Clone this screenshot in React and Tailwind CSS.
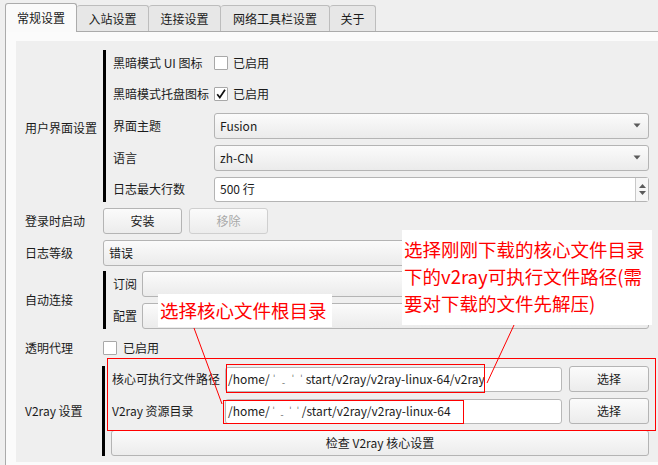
import React from "react";

const F = "font-['Noto_Sans_CJK_SC','Noto_Sans',sans-serif]";

function Arrow() {
  return (
    <svg width="8" height="5" viewBox="0 0 8 5">
      <path d="M0.5 0.5h7L4 4.5z" fill="#5a5a5a" />
    </svg>
  );
}

function Combo({ text, className = "" }) {
  return (
    <div
      className={`h-[26px] flex items-center justify-between pl-[5px] pr-[7px] rounded-[3px] border border-[#b4b4b4] bg-linear-to-b from-[#fbfbfb] to-[#ebebeb] ${className}`}
    >
      <span>{text}</span>
      <Arrow />
    </div>
  );
}

function Spin({ text }) {
  return (
    <div className="h-[25px] flex items-stretch rounded-[3px] border border-[#b4b4b4] bg-white flex-1">
      <div className="flex-1 flex items-center pl-[5px]">{text}</div>
      <div className="w-[13px] border-l border-[#c8c8c8] flex flex-col items-center justify-center gap-[3px] bg-[#f6f6f6]">
        <svg width="7" height="4" viewBox="0 0 7 4">
          <path d="M0 4h7L3.5 0z" fill="#5a5a5a" />
        </svg>
        <svg width="7" height="4" viewBox="0 0 7 4">
          <path d="M0 0h7L3.5 4z" fill="#5a5a5a" />
        </svg>
      </div>
    </div>
  );
}

function Check({ checked }) {
  return (
    <div className="w-[14px] h-[14px] border border-[#a8a8a8] bg-white flex items-center justify-center rounded-[1px]">
      {checked && (
        <svg width="12" height="12" viewBox="0 0 12 12">
          <path d="M2.2 6.2l2.6 3.3L10 1.8" stroke="#111" strokeWidth="1.7" fill="none" />
        </svg>
      )}
    </div>
  );
}

function Btn({ children, className = "", disabled }) {
  return (
    <div
      className={`h-[26px] flex items-center justify-center rounded-[3px] border bg-linear-to-b from-[#fbfbfb] to-[#ececec] ${
        disabled ? "border-[#cfcfcf] text-[#a9a9a9]" : "border-[#b4b4b4]"
      } ${className}`}
    >
      {children}
    </div>
  );
}

function Row({ children, className = "" }) {
  return <div className={`h-[26px] flex items-center ${className}`}>{children}</div>;
}

function PathInput({ tail, gap }) {
  return (
    <div className="w-[337px] h-[25px] bg-white border border-[#b8b8b8] rounded-[3px] flex items-center pl-[2px] text-[12px] whitespace-nowrap overflow-hidden">
      <span>/home/</span>
      <span className={`inline-flex ${gap} justify-around text-[8px] text-[#666] leading-none`}>
        <span>ˈ</span>
        <span>ˍ</span>
        <span>ˈ</span>
        <span>ˈ</span>
      </span>
      <span>{tail}</span>
    </div>
  );
}

export default function App() {
  return (
    <div className={`w-[658px] h-[465px] bg-[#efefef] overflow-hidden relative text-[12px] text-[#1b1b1b] ${F}`}>
      {/* tabs */}
      <div className="h-[31px] flex items-end pl-[5px]">
        <div className="w-[72px] h-[29px] bg-[#fafafa] border border-b-0 border-[#ababab] rounded-t-[3px] flex items-center justify-center relative z-10 mb-[-1px] pb-[1px]">
          常规设置
        </div>
        <div className="w-[72px] h-[26px] bg-[#e7e7e7] border border-b-0 border-l-0 border-[#bdbdbd] rounded-t-[3px] flex items-center justify-center">
          入站设置
        </div>
        <div className="w-[72px] h-[26px] bg-[#e7e7e7] border border-b-0 border-l-0 border-[#bdbdbd] rounded-t-[3px] flex items-center justify-center">
          连接设置
        </div>
        <div className="w-[109px] h-[26px] bg-[#e7e7e7] border border-b-0 border-l-0 border-[#bdbdbd] rounded-t-[3px] flex items-center justify-center">
          网络工具栏设置
        </div>
        <div className="w-[46px] h-[26px] bg-[#e7e7e7] border border-b-0 border-l-0 border-[#bdbdbd] rounded-t-[3px] flex items-center justify-center">
          关于
        </div>
      </div>

      {/* pane */}
      <div className="ml-[5px] h-[434px] border-t border-l border-[#ababab] bg-[#fbfbfb] pt-[9px] pl-[10px]">
        <div className="h-[421px] bg-[#efefef] pt-[8.5px] pr-[9px] flex flex-col gap-[5.7px]">
          {/* UI group */}
          <div className="flex">
            <div className="w-[87px] pl-[9px] flex items-center pt-[4px]">用户界面设置</div>
            <div className="flex-1 border-l-[3px] border-black pl-[7px] flex flex-col gap-[5.7px]">
              <Row>
                <div className="w-[101px]">黑暗模式 UI 图标</div>
                <Check />
                <span className="ml-[5px]">已启用</span>
              </Row>
              <Row>
                <div className="w-[101px]">黑暗模式托盘图标</div>
                <Check checked />
                <span className="ml-[5px]">已启用</span>
              </Row>
              <Row>
                <div className="w-[101px]">界面主题</div>
                <Combo text="Fusion" className="flex-1" />
              </Row>
              <Row>
                <div className="w-[101px]">语言</div>
                <Combo text="zh-CN" className="flex-1" />
              </Row>
              <Row>
                <div className="w-[101px]">日志最大行数</div>
                <Spin text="500 行" />
              </Row>
            </div>
          </div>

          <Row>
            <div className="w-[87px] pl-[9px]">登录时启动</div>
            <div className="flex gap-[7px]">
              <Btn className="w-[79px]">安装</Btn>
              <Btn className="w-[79px]" disabled>
                移除
              </Btn>
            </div>
          </Row>

          <Row>
            <div className="w-[87px] pl-[9px]">日志等级</div>
            <Combo text="错误" className="flex-1" />
          </Row>

          {/* auto connect */}
          <div className="flex">
            <div className="w-[87px] pl-[9px] flex items-center">自动连接</div>
            <div className="flex-1 border-l-[3px] border-black pl-[7px] flex flex-col gap-[5.7px]">
              <Row>
                <div className="w-[29px]">订阅</div>
                <Combo text="" className="flex-1" />
              </Row>
              <Row>
                <div className="w-[29px]">配置</div>
                <Combo text="" className="flex-1" />
              </Row>
            </div>
          </div>

          <Row>
            <div className="w-[87px] pl-[9px]">透明代理</div>
            <Check />
            <span className="ml-[6px]">已启用</span>
          </Row>

          {/* v2ray */}
          <div className="flex">
            <div className="w-[87px] pl-[9px] flex items-center">V2ray 设置</div>
            <div className="flex-1 border-l-[3px] border-black pl-[7px] flex flex-col gap-[5.7px]">
              <Row>
                <div className="w-[113px]">核心可执行文件路径</div>
                <PathInput gap="w-[36px]" tail="start/v2ray/v2ray-linux-64/v2ray" />
                <Btn className="w-[80px] ml-[7px]">选择</Btn>
              </Row>
              <Row>
                <div className="w-[113px]">V2ray 资源目录</div>
                <PathInput gap="w-[32px]" tail="/start/v2ray/v2ray-linux-64" />
                <Btn className="w-[80px] ml-[7px]">选择</Btn>
              </Row>
              <Row>
                <Btn className="flex-1 -ml-px">检查 V2ray 核心设置</Btn>
              </Row>
            </div>
          </div>
        </div>
      </div>

      {/* annotations */}
      <div className="absolute left-[107px] top-[358px] w-[549px] h-[73px] border-[1.5px] border-[#ff0000]" />
      <div className="absolute left-[226px] top-[364px] w-[259px] h-[29px] border-[1.5px] border-[#ff0000]" />
      <div className="absolute left-[223px] top-[400px] w-[241px] h-[24px] border-[1.5px] border-[#ff0000]" />

      <svg className="absolute left-0 top-0" width="658" height="465">
        <line x1="194" y1="328" x2="222" y2="404" stroke="#ff0000" strokeWidth="1" />
        <line x1="514" y1="325" x2="487" y2="383" stroke="#ff0000" strokeWidth="1" />
      </svg>

      <div className="absolute left-[158px] top-[294px] w-[174px] h-[33px] bg-white text-[#ff0000] text-[18.5px] leading-[33px] pl-[2px] whitespace-nowrap">
        选择核心文件根目录
      </div>
      <div className="absolute left-[402px] top-[230px] w-[250px] h-[95px] bg-white text-[#ff0000] text-[18.5px] leading-[27px] pl-[2px] pt-[5.5px] whitespace-nowrap">
        <div>选择刚刚下载的核心文件目录</div>
        <div>下的v2ray可执行文件路径(需</div>
        <div>要对下载的文件先解压)</div>
      </div>
    </div>
  );
}
